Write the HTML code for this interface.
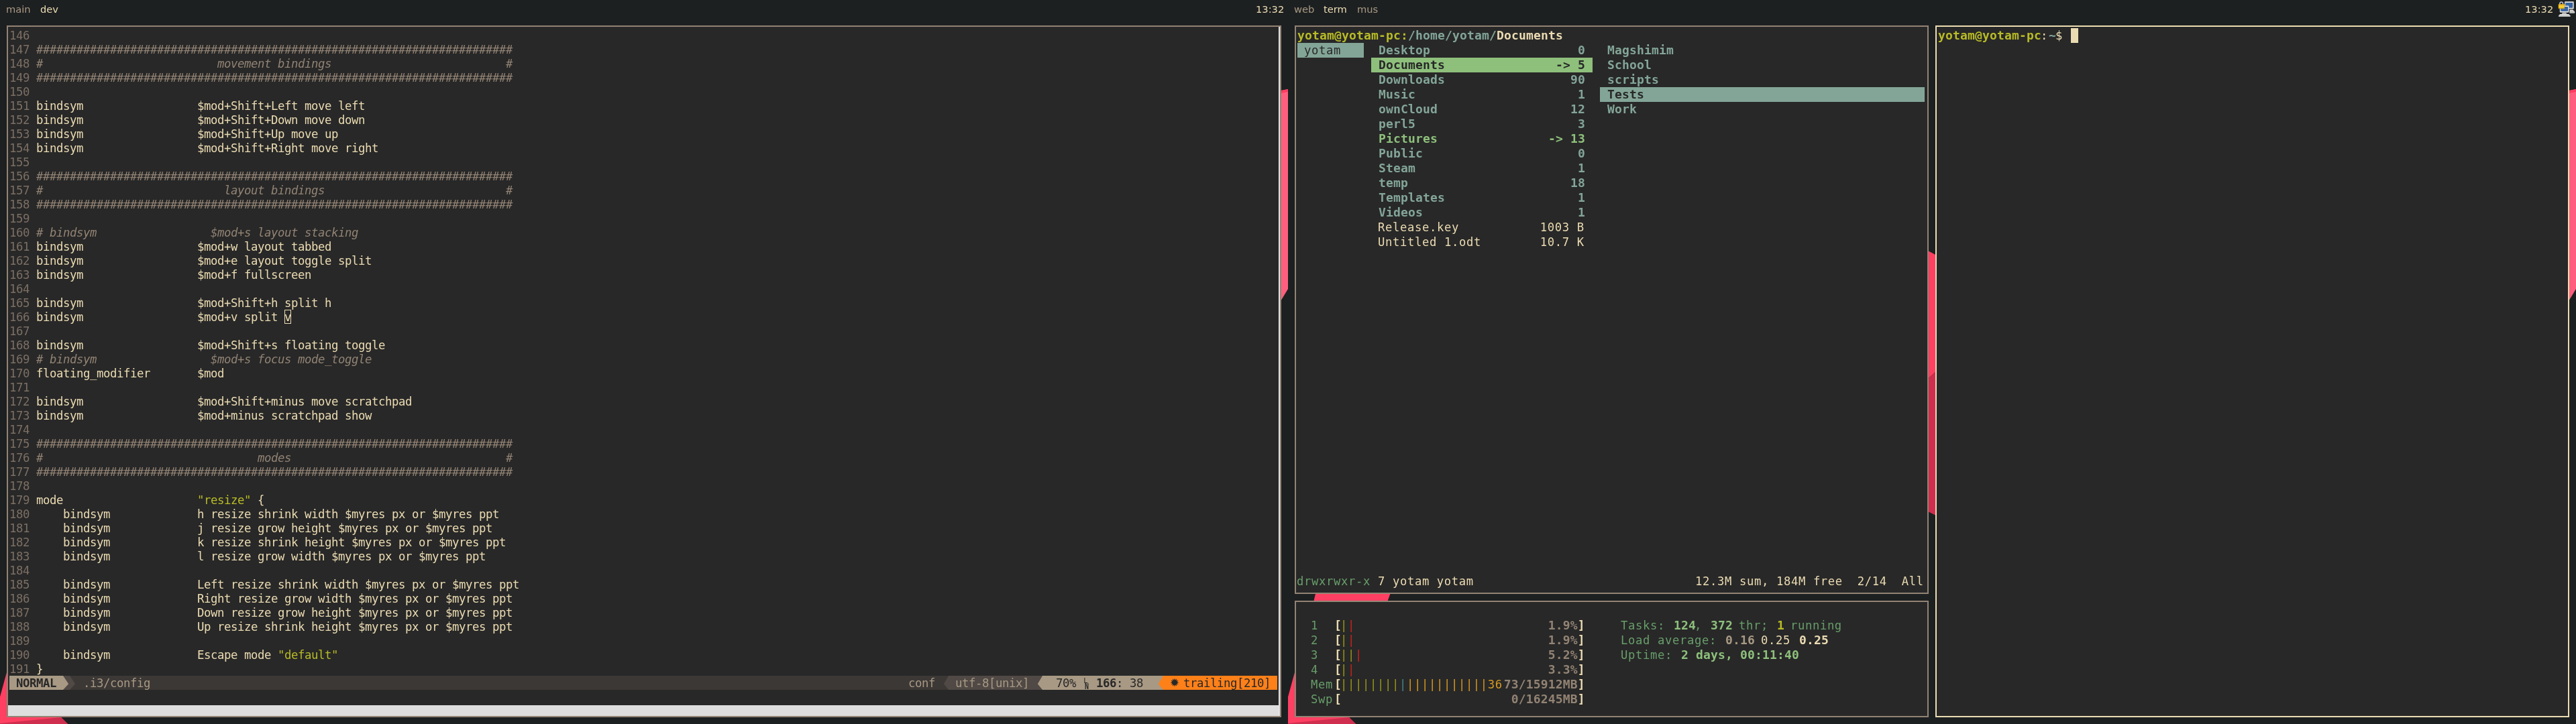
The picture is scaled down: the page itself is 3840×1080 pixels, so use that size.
<!DOCTYPE html>
<html lang="en">
<head>
<meta charset="utf-8">
<title>i3 desktop</title>
<style>
html,body{margin:0;padding:0;}
body{width:3840px;height:1080px;overflow:hidden;background:#1d2021;position:relative;font-family:"DejaVu Sans Mono","Liberation Mono",monospace;}
#wall{position:absolute;left:0;top:0;width:3840px;height:1080px;}
.bar{position:absolute;top:0;height:28px;background:#1d2021;}
.bt{position:absolute;top:0;height:28px;line-height:28px;font-family:"DejaVu Sans","Liberation Sans",sans-serif;font-size:14.67px;white-space:pre;color:#a89984;will-change:transform;}
.bt.f{color:#ebdbb2;}
.win{position:absolute;box-sizing:border-box;border:2px solid #928374;background:#282828;overflow:hidden;}
.win.foc{border-color:#ecdcb2;}
.row{position:absolute;left:0;white-space:pre;color:#ebdbb2;will-change:transform;}
.v .row{height:21px;line-height:21px;font-size:17.33px;letter-spacing:-0.4335px;}
.t .row{height:22px;line-height:22px;font-size:17.2px;letter-spacing:0.6447px;}
.t .GR,.t .BL,.t .AQ,.t .W,.t .K,.t .bd{font-size:18px;letter-spacing:0.1631px;font-weight:bold;position:relative;left:1px;}
.h .GR,.h .BL,.h .AQ,.h .W,.h .K,.h .bd{left:2px;}
.abs{position:absolute;}
b{font-weight:bold;}
.ln{color:#7c6f64;}
.cm{color:#928374;font-style:italic;}
.st{color:#b8bb26;}
.gy{color:#a89984;}
.dk{color:#282828;}
.aq{color:#689d6a;}
.AQ{color:#8ec07c;font-weight:bold;}
.BL{color:#83a598;font-weight:bold;}
.GR{color:#b8bb26;font-weight:bold;}
.W{color:#ebdbb2;font-weight:bold;}
.K{color:#928374;font-weight:bold;}
.g{color:#98971a;}
.r{color:#cc241d;}
.bl{color:#458588;}
.y{color:#d79921;}
</style>
</head>
<body>

<svg id="wall" width="3840" height="1080" viewBox="0 0 3840 1080">
<polygon points="1900,137 1920,133 1920,431 1900,464" fill="#ff5f7e"/>
<polygon points="1900,137 1920,133 1920,137 1900,141" fill="#ff3d61"/>
<polygon points="0,1039.5 10,1003 20,966.5 60,1040 91,1070 101,1080 0,1080" fill="#ff4063"/>
<polygon points="0,1079 91,1070 101,1080 0,1080" fill="#d02e4e"/>
<polygon points="3820,137 3840,133 3840,431 3820,464" fill="#ff5f7e"/>
<polygon points="3820,137 3840,133 3840,137 3820,141" fill="#ff3d61"/>
<polygon points="1920,1039.5 1930,1003 1940,966.5 1980,1040 2011,1070 2021,1080 1920,1080" fill="#ff4063"/>
<polygon points="1920,1079 2011,1070 2021,1080 1920,1080" fill="#d02e4e"/>
<polygon points="2870,372 2890,382.5 2890,551 2870,568" fill="#ff4063"/>
<polygon points="2870,568 2890,551 2890,771 2870,761" fill="#d02e4e"/>
<polygon points="1961.5,884 2073,884 2068,898 1958,898" fill="#ff4063"/>
</svg>
<div class="bt" style="left:8.5px">main</div>
<div class="bt f" style="left:59.5px">dev</div>
<div class="bt f" style="right:1926px">13:32</div>
<div class="bt" style="left:1928.5px">web</div>
<div class="bt f" style="left:1972.5px">term</div>
<div class="bt" style="left:2023px">mus</div>
<div class="bt f" style="right:34px">13:32</div>
<svg class="abs" style="left:3813px;top:1px" width="27" height="26" viewBox="0 0 27 26">
<polygon points="17.500,13.600 22.500,13.600 25.300,17 24.800,18.400 17.500,18.400" fill="#d9dbd8"/>
<polygon points="17.500,15.600 24.200,15.600 25.300,17 24.800,18.400 17.500,18.400" fill="#c4c6c3"/>
<rect x="10.200" y="1.300" width="13.400" height="11" rx="0.800" fill="#e9eae8" stroke="#a3a5a2" stroke-width="0.600"/>
<rect x="11.400" y="3.100" width="10.700" height="7.500" fill="#204a87"/>
<rect x="11.900" y="3.600" width="9.700" height="6.500" fill="#3465a4"/>
<polygon points="7,17.400 12,17.400 13.500,20.300 5.500,20.300" fill="#b5b7b4"/>
<polygon points="3.200,19.900 16.200,19.900 18.600,22.200 18.200,23.900 1.400,23.900 1,22.200" fill="#dcdedb"/>
<polygon points="1,22.200 18.600,22.200 18.200,23.900 1.400,23.900" fill="#b9bcb7"/>
<rect x="3" y="7.500" width="13.200" height="9.900" rx="0.800" fill="#f0f1ef" stroke="#a3a5a2" stroke-width="0.600"/>
<rect x="4.300" y="9" width="10.600" height="6.700" fill="#204a87"/>
<rect x="4.800" y="9.500" width="9.600" height="5.700" fill="#3868a8"/>
<path d="M2.900 6.200v-2a2.300 2.300 0 0 1 4.600 0v2" transform="translate(0,0)" fill="none" stroke="#c3cad6" stroke-width="1.500"/>
<rect x="0.900" y="5.300" width="9" height="6.500" rx="0.500" fill="#edb91f"/>
<rect x="0.900" y="5.300" width="9" height="6.500" rx="0.500" fill="none" stroke="#c8960c" stroke-width="0.500"/>
<rect x="1.500" y="8.400" width="7.800" height="1.600" fill="#f6d93e"/>
<rect x="1.500" y="6.800" width="7.800" height="0.700" fill="#f3cd45"/>
</svg>
<div class="win v" style="left:10px;top:38px;width:1900px;height:1032px">
<div class="row" style="left:2px;top:3px;"><span class="ln">146 </span></div>
<div class="row" style="left:2px;top:24px;"><span class="ln">147 </span><span class="cm">#######################################################################</span></div>
<div class="row" style="left:2px;top:45px;"><span class="ln">148 </span><span class="cm">#                          movement bindings                          #</span></div>
<div class="row" style="left:2px;top:66px;"><span class="ln">149 </span><span class="cm">#######################################################################</span></div>
<div class="row" style="left:2px;top:87px;"><span class="ln">150 </span></div>
<div class="row" style="left:2px;top:108px;"><span class="ln">151 </span>bindsym                 $mod+Shift+Left move left</div>
<div class="row" style="left:2px;top:129px;"><span class="ln">152 </span>bindsym                 $mod+Shift+Down move down</div>
<div class="row" style="left:2px;top:150px;"><span class="ln">153 </span>bindsym                 $mod+Shift+Up move up</div>
<div class="row" style="left:2px;top:171px;"><span class="ln">154 </span>bindsym                 $mod+Shift+Right move right</div>
<div class="row" style="left:2px;top:192px;"><span class="ln">155 </span></div>
<div class="row" style="left:2px;top:213px;"><span class="ln">156 </span><span class="cm">#######################################################################</span></div>
<div class="row" style="left:2px;top:234px;"><span class="ln">157 </span><span class="cm">#                           layout bindings                           #</span></div>
<div class="row" style="left:2px;top:255px;"><span class="ln">158 </span><span class="cm">#######################################################################</span></div>
<div class="row" style="left:2px;top:276px;"><span class="ln">159 </span></div>
<div class="row" style="left:2px;top:297px;"><span class="ln">160 </span><span class="cm"># bindsym                 $mod+s layout stacking</span></div>
<div class="row" style="left:2px;top:318px;"><span class="ln">161 </span>bindsym                 $mod+w layout tabbed</div>
<div class="row" style="left:2px;top:339px;"><span class="ln">162 </span>bindsym                 $mod+e layout toggle split</div>
<div class="row" style="left:2px;top:360px;"><span class="ln">163 </span>bindsym                 $mod+f fullscreen</div>
<div class="row" style="left:2px;top:381px;"><span class="ln">164 </span></div>
<div class="row" style="left:2px;top:402px;"><span class="ln">165 </span>bindsym                 $mod+Shift+h split h</div>
<div class="row" style="left:2px;top:423px;"><span class="ln">166 </span>bindsym                 $mod+v split v</div>
<div class="row" style="left:2px;top:444px;"><span class="ln">167 </span></div>
<div class="row" style="left:2px;top:465px;"><span class="ln">168 </span>bindsym                 $mod+Shift+s floating toggle</div>
<div class="row" style="left:2px;top:486px;"><span class="ln">169 </span><span class="cm"># bindsym                 $mod+s focus mode_toggle</span></div>
<div class="row" style="left:2px;top:507px;"><span class="ln">170 </span>floating_modifier       $mod</div>
<div class="row" style="left:2px;top:528px;"><span class="ln">171 </span></div>
<div class="row" style="left:2px;top:549px;"><span class="ln">172 </span>bindsym                 $mod+Shift+minus move scratchpad</div>
<div class="row" style="left:2px;top:570px;"><span class="ln">173 </span>bindsym                 $mod+minus scratchpad show</div>
<div class="row" style="left:2px;top:591px;"><span class="ln">174 </span></div>
<div class="row" style="left:2px;top:612px;"><span class="ln">175 </span><span class="cm">#######################################################################</span></div>
<div class="row" style="left:2px;top:633px;"><span class="ln">176 </span><span class="cm">#                                modes                                #</span></div>
<div class="row" style="left:2px;top:654px;"><span class="ln">177 </span><span class="cm">#######################################################################</span></div>
<div class="row" style="left:2px;top:675px;"><span class="ln">178 </span></div>
<div class="row" style="left:2px;top:696px;"><span class="ln">179 </span>mode                    <span class="st">"resize"</span> {</div>
<div class="row" style="left:2px;top:717px;"><span class="ln">180 </span>    bindsym             h resize shrink width $myres px or $myres ppt</div>
<div class="row" style="left:2px;top:738px;"><span class="ln">181 </span>    bindsym             j resize grow height $myres px or $myres ppt</div>
<div class="row" style="left:2px;top:759px;"><span class="ln">182 </span>    bindsym             k resize shrink height $myres px or $myres ppt</div>
<div class="row" style="left:2px;top:780px;"><span class="ln">183 </span>    bindsym             l resize grow width $myres px or $myres ppt</div>
<div class="row" style="left:2px;top:801px;"><span class="ln">184 </span></div>
<div class="row" style="left:2px;top:822px;"><span class="ln">185 </span>    bindsym             Left resize shrink width $myres px or $myres ppt</div>
<div class="row" style="left:2px;top:843px;"><span class="ln">186 </span>    bindsym             Right resize grow width $myres px or $myres ppt</div>
<div class="row" style="left:2px;top:864px;"><span class="ln">187 </span>    bindsym             Down resize grow height $myres px or $myres ppt</div>
<div class="row" style="left:2px;top:885px;"><span class="ln">188 </span>    bindsym             Up resize shrink height $myres px or $myres ppt</div>
<div class="row" style="left:2px;top:906px;"><span class="ln">189 </span></div>
<div class="row" style="left:2px;top:927px;"><span class="ln">190 </span>    bindsym             Escape mode <span class="st">"default"</span></div>
<div class="row" style="left:2px;top:948px;"><span class="ln">191 </span>}</div>
<div class="abs" style="left:412px;top:422px;width:10px;height:21px;box-sizing:border-box;border:1px solid #ebdbb2"></div>
<div class="abs" style="left:2px;top:968px;width:80px;height:21px;background:#a89984"></div>
<div class="abs" style="left:82px;top:968px;width:10px;height:21px;background:#504945"></div>
<div class="abs" style="left:92px;top:968px;width:1310px;height:21px;background:#3c3836"></div>
<div class="abs" style="left:1402px;top:968px;width:140px;height:21px;background:#504945"></div>
<div class="abs" style="left:1542px;top:968px;width:180px;height:21px;background:#a89984"></div>
<div class="abs" style="left:1722px;top:968px;width:170px;height:21px;background:#fe8019"></div>
<svg class="abs" style="left:82px;top:968px" width="10" height="21" viewBox="0 0 10 21"><polygon points="0,0 8.2,12.2 0,21" fill="#a89984"/></svg>
<svg class="abs" style="left:92px;top:968px" width="10" height="21" viewBox="0 0 10 21"><polygon points="0,0 8.2,12.2 0,21" fill="#504945"/></svg>
<svg class="abs" style="left:1392px;top:968px" width="10" height="21" viewBox="0 0 10 21"><polygon points="10,0 2.8,12.3 10,21" fill="#504945"/></svg>
<svg class="abs" style="left:1532px;top:968px" width="10" height="21" viewBox="0 0 10 21"><polygon points="10,0 2.8,12.3 10,21" fill="#a89984"/></svg>
<svg class="abs" style="left:1712px;top:968px" width="10" height="21" viewBox="0 0 10 21"><polygon points="10,0 2.8,12.3 10,21" fill="#fe8019"/></svg>
<div class="row" style="left:2px;top:969px"><span class="dk" style="font-weight:bold"> NORMAL </span></div>
<div class="row" style="left:112px;top:969px"><span class="gy">.i3/config</span></div>
<div class="row" style="left:1342px;top:969px"><span class="gy">conf</span></div>
<div class="row" style="left:1412px;top:969px"><span class="gy">utf-8[unix]</span></div>
<div class="row" style="left:1562px;top:969px"><span class="dk">70%</span></div>
<div class="abs dk" style="left:1602px;top:968px;width:10px;height:21px;overflow:hidden;will-change:transform"><span class="abs" style="left:1.2px;top:0.5px;font-size:10.5px;line-height:12px">L</span><span class="abs" style="left:2.8px;top:9px;font-size:12.5px;line-height:14px;font-weight:bold;transform:scaleX(0.8);transform-origin:0 0">N</span></div>
<div class="row" style="left:1622px;top:969px"><span class="dk" style="font-weight:bold">166</span><span class="dk">: 38</span></div>
<div class="row" style="left:1752px;top:969px"><span class="dk">trailing[210]</span></div>
<div class="abs dk" style="left:1729px;top:962px;width:20px;height:28px;line-height:28px;text-align:center;font-size:22.5px;will-change:transform">✹</div>
<div class="abs" style="left:0;top:1012px;width:1896px;height:16px;background:#dedede"></div>
<div class="abs" style="left:1894px;top:0;width:2px;height:1028px;background:linear-gradient(90deg,#e9e9e9 0 1px,#dcdcdc 1px 2px)"></div>
</div>
<div class="win t" style="left:1930px;top:38px;width:945px;height:848px">
<div class="row" style="left:1px;top:2px;"><span class="GR">yotam@yotam-pc</span><span class="GR">:</span><span class="BL">/home/yotam/</span><span class="W">Documents</span></div>
<div class="abs" style="left:2px;top:24px;width:99px;height:22px;background:#83a598"></div>
<div class="row" style="left:1px;top:24px;"><span class="dk"> yotam</span></div>
<div class="row" style="left:111px;top:24px;"><span class="BL"> Desktop                    0 </span></div>
<div class="abs" style="left:112px;top:46px;width:330px;height:22px;background:#8ec07c"></div>
<div class="row" style="left:111px;top:46px;"><span class="dk bd"> Documents               -&gt; 5 </span></div>
<div class="row" style="left:111px;top:68px;"><span class="BL"> Downloads                 90 </span></div>
<div class="row" style="left:111px;top:90px;"><span class="BL"> Music                      1 </span></div>
<div class="row" style="left:111px;top:112px;"><span class="BL"> ownCloud                  12 </span></div>
<div class="row" style="left:111px;top:134px;"><span class="BL"> perl5                      3 </span></div>
<div class="row" style="left:111px;top:156px;"><span class="AQ"> Pictures               -&gt; 13 </span></div>
<div class="row" style="left:111px;top:178px;"><span class="BL"> Public                     0 </span></div>
<div class="row" style="left:111px;top:200px;"><span class="BL"> Steam                      1 </span></div>
<div class="row" style="left:111px;top:222px;"><span class="BL"> temp                      18 </span></div>
<div class="row" style="left:111px;top:244px;"><span class="BL"> Templates                  1 </span></div>
<div class="row" style="left:111px;top:266px;"><span class="BL"> Videos                     1 </span></div>
<div class="row" style="left:111px;top:288px;"> Release.key           1003 B </div>
<div class="row" style="left:111px;top:310px;"> Untitled 1.odt        10.7 K </div>
<div class="row" style="left:452px;top:24px;"><span class="BL"> Magshimim</span></div>
<div class="row" style="left:452px;top:46px;"><span class="BL"> School</span></div>
<div class="row" style="left:452px;top:68px;"><span class="BL"> scripts</span></div>
<div class="abs" style="left:453px;top:90px;width:484px;height:22px;background:#83a598"></div>
<div class="row" style="left:452px;top:90px;"><span class="dk bd"> Tests</span></div>
<div class="row" style="left:452px;top:112px;"><span class="BL"> Work</span></div>
<div class="row" style="left:1px;top:816px;"><span class="aq">drwxrwxr-x</span> 7 yotam yotam</div>
<div class="row" style="left:595px;top:816px;">12.3M sum, 184M free  2/14  All</div>
</div>
<div class="win t h" style="left:1930px;top:896px;width:945px;height:174px">
<div class="row" style="left:22px;top:24px;"><span class="aq">1  </span><span class="W">[</span><span class="g">|</span><span class="r">|</span>                          <span class="K">1.9%</span><span class="W">]</span></div>
<div class="row" style="left:22px;top:46px;"><span class="aq">2  </span><span class="W">[</span><span class="g">|</span><span class="r">|</span>                          <span class="K">1.9%</span><span class="W">]</span></div>
<div class="row" style="left:22px;top:68px;"><span class="aq">3  </span><span class="W">[</span><span class="g">||</span><span class="r">|</span>                         <span class="K">5.2%</span><span class="W">]</span></div>
<div class="row" style="left:22px;top:90px;"><span class="aq">4  </span><span class="W">[</span><span class="g">|</span><span class="r">|</span>                          <span class="K">3.3%</span><span class="W">]</span></div>
<div class="row" style="left:22px;top:112px;"><span class="aq">Mem</span><span class="W">[</span><span class="g">||||||||</span><span class="bl">|</span><span class="y">|||||||||||</span><span class="y">36</span><span class="K">73/15912MB</span><span class="W">]</span></div>
<div class="row" style="left:22px;top:134px;"><span class="aq">Swp</span><span class="W">[</span>                       <span class="K">0/16245MB</span><span class="W">]</span></div>
<div class="row" style="left:484px;top:24px;"><span class="aq">Tasks: </span><span class="AQ">124</span><span class="aq">, </span><span class="AQ">372</span><span class="aq"> thr; </span><span class="GR">1</span><span class="aq"> running</span></div>
<div class="row" style="left:484px;top:46px;"><span class="aq">Load average: </span><span class="gy bd">0.16</span> 0.25 <span class="W">0.25</span></div>
<div class="row" style="left:484px;top:68px;"><span class="aq">Uptime: </span><span class="AQ">2 days, 00:11:40</span></div>
</div>
<div class="win t foc" style="left:2885px;top:38px;width:945px;height:1032px">
<div class="row" style="left:1px;top:2px;"><span class="GR">yotam@yotam-pc</span>:<span class="BL">~</span>$ </div>
<div class="abs" style="left:200px;top:2px;width:11px;height:22px;background:#ebdbb2"></div>
</div>
</body>
</html>
